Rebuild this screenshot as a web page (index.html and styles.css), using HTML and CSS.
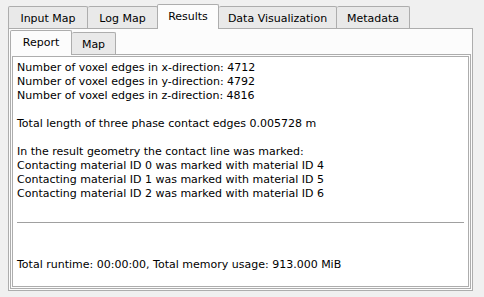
FILE: index.html
```html
<!DOCTYPE html>
<html>
<head>
<meta charset="utf-8">
<link rel="stylesheet" href="styles.css">
</head>
<body>
<div class="tabwidget outer">
  <div class="tabbar">
    <div class="tab t-input">Input Map</div>
    <div class="tab t-log">Log Map</div>
    <div class="tab selected t-results">Results</div>
    <div class="tab t-data">Data Visualization</div>
    <div class="tab t-meta">Metadata</div>
  </div>
  <div class="pane">
    <div class="tabwidget inner">
      <div class="tabbar">
        <div class="tab selected first t-report">Report</div>
        <div class="tab t-map">Map</div>
      </div>
      <div class="pane">
        <div class="textedit">
          <p>Number of voxel edges in x-direction: 4712</p>
          <p>Number of voxel edges in y-direction: 4792</p>
          <p>Number of voxel edges in z-direction: 4816</p>
          <p class="blank">&nbsp;</p>
          <p>Total length of three phase contact edges 0.005728 m</p>
          <p class="blank">&nbsp;</p>
          <p>In the result geometry the contact line was marked:</p>
          <p>Contacting material ID 0 was marked with material ID 4</p>
          <p>Contacting material ID 1 was marked with material ID 5</p>
          <p>Contacting material ID 2 was marked with material ID 6</p>
          <hr class="rule">
          <p class="runtime">Total runtime: 00:00:00, Total memory usage: 913.000 MiB</p>
        </div>
      </div>
    </div>
  </div>
</div>
</body>
</html>
```

FILE: styles.css
```css
html, body {
  margin: 0;
  padding: 0;
  background: #f0f0f0;
  width: 484px;
  height: 297px;
  overflow: hidden;
  font-family: "DejaVu Sans", Verdana, sans-serif;
  font-size: 11px;
  color: #000;
}

.tabwidget {
  display: flex;
  flex-direction: column;
}

.outer {
  margin-left: 8px;
  width: 465px;
  padding-top: 4px;
}

.tabbar {
  display: flex;
  align-items: flex-end;
  height: 24px;
  position: relative;
  z-index: 1;
}

.tab {
  box-sizing: border-box;
  height: 22px;
  border: 1px solid #adadad;
  border-bottom: none;
  border-left: none;
  border-radius: 2px 2px 0 0;
  background: #e9e9e9;
  display: flex;
  align-items: center;
  justify-content: center;
  color: #000;
  padding-top: 1px;
  white-space: nowrap;
}

.outer > .tabbar > .tab:first-child,
.tab.first {
  border-left: 1px solid #adadad;
}

.tab.selected {
  height: 25px;
  background: #fcfcfc;
  margin-bottom: -1px;
  border-left: 1px solid #adadad;
  padding-bottom: 3px;
}

.t-input { width: 80px; }
.t-log { width: 70px; }
.t-results { width: 62px; margin-left: -1px; }
.t-data { width: 118px; }
.t-meta { width: 73px; }

.t-report { width: 62px; }
.t-map { width: 44px; }

.pane {
  box-sizing: border-box;
  border: 1px solid #adadad;
  background: #fcfcfc;
  padding: 1px;
}

.outer > .pane {
  height: 263px;
}

.inner {
  height: 100%;
}

.inner > .tabbar {
  height: 24px;
}

.inner > .pane {
  flex: 1;
  background: #fcfcfc;
}

.textedit {
  box-sizing: border-box;
  height: 100%;
  border: 1px solid #adadad;
  background: #ffffff;
  padding: 4px;
}

.textedit p {
  margin: 0;
  line-height: 14px;
  white-space: nowrap;
}

.rule {
  border: none;
  border-top: 1px solid #a0a0a0;
  margin: 21px 0 0 0;
  height: 0;
}

.runtime {
  margin-top: 35px !important;
}
```
